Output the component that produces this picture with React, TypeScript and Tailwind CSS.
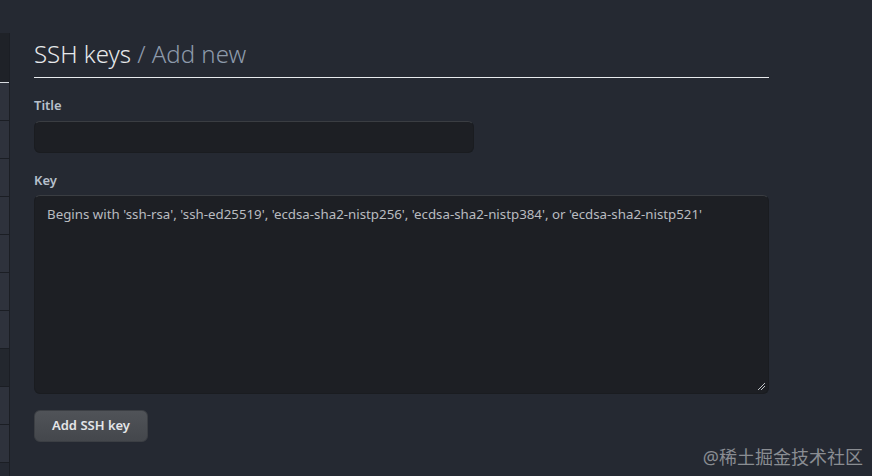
import React from 'react';

const SIDE_ROWS = [false, false, false, false, false, false, false, true, false, false];

export default function App() {
  return (
    <div
      className="relative flex h-[476px] w-[872px] overflow-hidden bg-[#252932] text-[#c9d1d9]"
      style={{ fontFamily: '"Noto Sans", "Noto Sans CJK SC", sans-serif' }}
    >
      {/* left nav (cut off) */}
      <div className="mt-[33px] w-[10px] shrink-0 border-r border-[#1b1e24]">
        <div className="h-[50px] border-b border-[#d8dce0] bg-[#1f2228]" />
        {SIDE_ROWS.map((sel, i) => (
          <div
            key={i}
            className={`h-[38px] border-b border-[#1b1e24] ${sel ? 'bg-[#23272e]' : 'bg-[#2e323c]'}`}
          />
        ))}
      </div>

      <div className="ml-[24px] w-[735px] pt-[38px]">
        <div className="border-b border-[#e8eaed] pb-[7px]">
          <h2 className="text-[24px] font-light leading-[32px] text-[#e6e8eb]">
            SSH keys <span className="text-[#8d9aab]">/ Add new</span>
          </h2>
        </div>

        <div className="mt-[17px]">
          <label className="block text-[13px] font-semibold leading-[20px] text-[#b7c0cc]">Title</label>
          <div className="mt-[6px] h-[32px] w-[440px] rounded-[6px] border border-[#1a1c20] border-t-[#3a3d42] bg-[#1d1f24]" />
        </div>

        <div className="mt-[17px]">
          <label className="block text-[13px] font-semibold leading-[20px] text-[#b7c0cc]">Key</label>
          <div className="relative mt-[5px] h-[199px] w-[735px] rounded-[6px] border border-[#1a1c20] border-t-[#3a3d42] bg-[#1d1f24] px-[12px] pt-[8px]">
            <p className="text-[13.3px] leading-[20px] text-[#b9bcc0]">
              Begins with 'ssh-rsa', 'ssh-ed25519', 'ecdsa-sha2-nistp256', 'ecdsa-sha2-nistp384', or 'ecdsa-sha2-nistp521'
            </p>
            <svg className="absolute bottom-[2px] right-[2px]" width="9" height="9" viewBox="0 0 9 9">
              <path d="M8 1 L1 8 M8 4 L4 8" stroke="#bfc3c8" strokeWidth="1" />
            </svg>
          </div>
        </div>

        <button className="mt-[16px] h-[32px] w-[114px] rounded-[6px] border border-[#3c3f44] bg-gradient-to-b from-[#505358] to-[#44474c] text-[13px] font-semibold text-[#e4e6e8]">
          Add SSH key
        </button>
      </div>

      <div className="absolute bottom-[8px] right-[9px] text-[18px] leading-[22px] text-[#8a8d92]">
        @稀土掘金技术社区
      </div>
    </div>
  );
}
